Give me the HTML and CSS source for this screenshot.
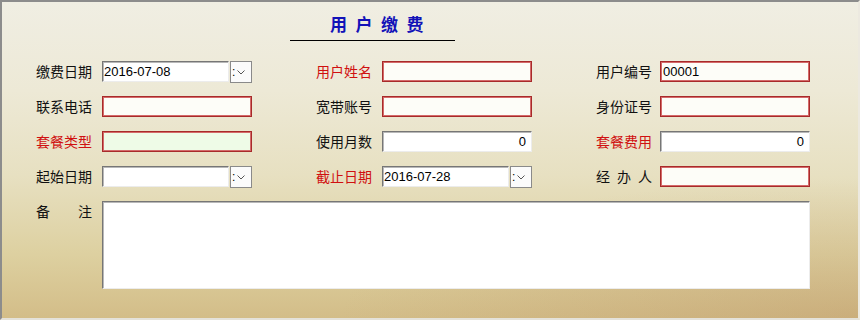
FILE: index.html
```html
<!DOCTYPE html>
<html lang="zh-CN">
<head>
<meta charset="utf-8">
<title>用户缴费</title>
<link rel="stylesheet" href="styles.css">
</head>
<body>
<div class="frame">
  <div class="header">
    <h1 class="title">用户缴费</h1>
  </div>
  <div class="form-grid">
    <div class="field">
      <span class="label">缴费日期</span>
      <div class="date">
        <input class="box sunken date-text" type="text" value="2016-07-08">
        <span class="date-btn"><span class="colon">:</span><svg class="chev" width="8" height="5" viewBox="0 0 8 5"><path d="M0.5 0.5 L4 4 L7.5 0.5" fill="none" stroke="#555" stroke-width="1"/></svg></span>
      </div>
    </div>
    <div class="field">
      <span class="label req">用户姓名</span>
      <input class="box red" type="text" value="">
    </div>
    <div class="field">
      <span class="label">用户编号</span>
      <input class="box red" type="text" value="00001">
    </div>

    <div class="field">
      <span class="label">联系电话</span>
      <input class="box red" type="text" value="">
    </div>
    <div class="field">
      <span class="label">宽带账号</span>
      <input class="box red" type="text" value="">
    </div>
    <div class="field">
      <span class="label">身份证号</span>
      <input class="box red" type="text" value="">
    </div>

    <div class="field">
      <span class="label req">套餐类型</span>
      <input class="box red green" type="text" value="">
    </div>
    <div class="field">
      <span class="label">使用月数</span>
      <input class="box sunken num" type="text" value="0">
    </div>
    <div class="field">
      <span class="label req">套餐费用</span>
      <input class="box sunken num" type="text" value="0">
    </div>

    <div class="field">
      <span class="label">起始日期</span>
      <div class="date">
        <input class="box sunken date-text" type="text" value="">
        <span class="date-btn"><span class="colon">:</span><svg class="chev" width="8" height="5" viewBox="0 0 8 5"><path d="M0.5 0.5 L4 4 L7.5 0.5" fill="none" stroke="#555" stroke-width="1"/></svg></span>
      </div>
    </div>
    <div class="field">
      <span class="label req">截止日期</span>
      <div class="date">
        <input class="box sunken date-text" type="text" value="2016-07-28">
        <span class="date-btn"><span class="colon">:</span><svg class="chev" width="8" height="5" viewBox="0 0 8 5"><path d="M0.5 0.5 L4 4 L7.5 0.5" fill="none" stroke="#555" stroke-width="1"/></svg></span>
      </div>
    </div>
    <div class="field">
      <span class="label spread"><span>经</span><span>办</span><span>人</span></span>
      <input class="box red" type="text" value="">
    </div>
  </div>
  <div class="remark-row">
    <span class="label spread"><span>备</span><span>注</span></span>
    <textarea class="box sunken remark"></textarea>
  </div>
</div>
</body>
</html>
```
FILE: styles.css
```css
html, body {
  margin: 0;
  padding: 0;
  background: #ffffff;
}

.frame {
  box-sizing: border-box;
  width: 860px;
  height: 320px;
  border-top: 2px solid #8c8c8c;
  border-left: 2px solid #8c8c8c;
  border-right: 2px solid #ece9e0;
  border-bottom: 2px solid #e4e2da;
  background:
    radial-gradient(ellipse 520px 140px at 100% 100%, rgba(180, 135, 90, 0.28), rgba(180, 135, 90, 0) 100%),
    linear-gradient(to bottom, #f0eee3 0%, #ede9d6 28%, #e7e0c1 55%, #ddd0a0 80%, #d3bd88 100%);
  font-family: "Noto Sans CJK SC", "Noto Sans", sans-serif;
  color: #000;
}

.header {
  margin-left: 288px;
  width: 165px;
  padding-top: 12px;
  border-bottom: 1px solid #000;
  padding-bottom: 6px;
}

.title {
  margin: 0;
  padding-left: 40px;
  font-size: 17px;
  line-height: 20px;
  font-weight: bold;
  letter-spacing: 8.5px;
  color: #1212b8;
}

.form-grid {
  margin-top: 20px;
  margin-left: 34px;
  display: grid;
  grid-template-columns: repeat(3, 216px);
  column-gap: 64px;
  row-gap: 14px;
}

.field {
  display: flex;
  align-items: center;
  gap: 10px;
  height: 21px;
}

.field:nth-child(3n) {
  gap: 8px;
}

.label {
  flex: none;
  width: 56px;
  font-size: 14px;
  line-height: 21px;
  white-space: nowrap;
  color: #111;
}

.label.req {
  color: #d01010;
}

.label.spread {
  display: flex;
  justify-content: space-between;
}

.box {
  box-sizing: border-box;
  margin: 0;
  width: 150px;
  height: 21px;
  padding: 0 2px;
  font-family: "Liberation Sans", Arial, sans-serif;
  font-size: 13px;
  color: #000;
  outline: none;
}

.red {
  border: 1px solid #a82a2a;
  box-shadow: inset 0 0 0 1px #d46a6a;
  background: #fdfdf8;
}

.red.green {
  background: #eefbe7;
}

.sunken {
  border-style: solid;
  border-width: 1px;
  border-color: #767676 #ececec #ececec #767676;
  box-shadow: inset 1px 1px 0 #b8b8b8;
  background: #ffffff;
}

.num {
  text-align: right;
  padding-right: 5px;
}

.date {
  display: flex;
  align-items: flex-start;
  gap: 1px;
  height: 21px;
}

.date-text {
  width: 127px;
  padding-left: 1px;
}

.date-btn {
  box-sizing: border-box;
  width: 22px;
  height: 22px;
  border: 1px solid #8a8a8a;
  background: #fbfbfb;
  display: flex;
  align-items: center;
  padding-left: 1px;
  gap: 2px;
}

.colon {
  font-family: "Liberation Sans", Arial, sans-serif;
  font-size: 12px;
  line-height: 12px;
  color: #000;
}

.chev {
  display: block;
}

.remark-row {
  margin-top: 14px;
  margin-left: 34px;
  display: flex;
  align-items: flex-start;
  gap: 10px;
}

.remark {
  width: 708px;
  height: 88px;
  resize: none;
}
```
